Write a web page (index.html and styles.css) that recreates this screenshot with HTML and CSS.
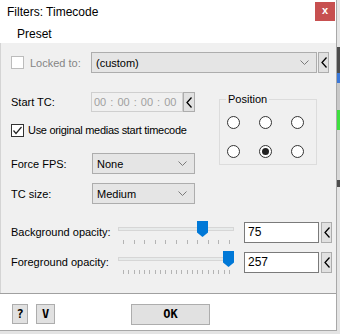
FILE: index.html
```html
<!DOCTYPE html>
<html lang="en">
<head>
    <meta charset="UTF-8">
    <title>Filters: Timecode</title>
    <link rel="stylesheet" href="styles.css">
</head>
<body>
    <div class="screen">
        <div class="window">
            <div class="titlebar">
                <span class="title">Filters: Timecode</span>
                <span class="close">x</span>
            </div>
            <div class="menubar">
                <span class="menu-item">Preset</span>
            </div>

            <div class="content">
                <div class="row locked-row">
                    <span class="checkbox disabled"></span>
                    <span class="label disabled-text">Locked to:</span>
                    <div class="combo combo-wide">
                        <span>(custom)</span>
                        <svg class="chev" width="9" height="5" viewBox="0 0 9 5"><polyline points="0.5,0.5 4.5,4.5 8.5,0.5" fill="none" stroke="#7a7a7a" stroke-width="1"/></svg>
                    </div>
                    <span class="back back-tall"><svg width="6" height="11" viewBox="0 0 6 11"><polyline points="5.5,0.5 1,5.5 5.5,10.5" fill="none" stroke="#000" stroke-width="1.3"/></svg></span>
                </div>

                <div class="middle">
                    <div class="left">
                        <div class="row tc-row">
                            <span class="label field-label">Start TC:</span>
                            <span class="tc-box">00 : 00 : 00 : 00</span>
                            <span class="back back-tc"><svg width="6" height="11" viewBox="0 0 6 11"><polyline points="5.5,0.5 1,5.5 5.5,10.5" fill="none" stroke="#000" stroke-width="1.3"/></svg></span>
                        </div>
                        <div class="row check-row">
                            <span class="checkbox checked">
                                <svg width="11" height="11" viewBox="0 0 11 11"><polyline points="1.5,5.5 4,8.5 9.5,2" fill="none" stroke="#222" stroke-width="1.2"/></svg>
                            </span>
                            <span class="label tight">Use original medias start timecode</span>
                        </div>
                        <div class="row combo-row fps-row">
                            <span class="label field-label">Force FPS:</span>
                            <div class="combo combo-small">
                                <span>None</span>
                                <svg class="chev" width="9" height="5" viewBox="0 0 9 5"><polyline points="0.5,0.5 4.5,4.5 8.5,0.5" fill="none" stroke="#7a7a7a" stroke-width="1"/></svg>
                            </div>
                        </div>
                        <div class="row combo-row size-row">
                            <span class="label field-label">TC size:</span>
                            <div class="combo combo-small">
                                <span>Medium</span>
                                <svg class="chev" width="9" height="5" viewBox="0 0 9 5"><polyline points="0.5,0.5 4.5,4.5 8.5,0.5" fill="none" stroke="#7a7a7a" stroke-width="1"/></svg>
                            </div>
                        </div>
                    </div>

                    <div class="group">
                        <span class="legend">Position</span>
                        <div class="radios">
                            <span class="radio"></span>
                            <span class="radio"></span>
                            <span class="radio"></span>
                            <span class="radio"></span>
                            <span class="radio on"></span>
                            <span class="radio"></span>
                        </div>
                    </div>
                </div>

                <div class="sliders">
                    <div class="row slider-row">
                        <span class="label slider-label">Background opacity:</span>
                        <div class="slider">
                            <div class="track"></div>
                            <div class="ticks">
                                <i></i><i></i><i></i><i></i><i></i><i></i><i></i><i></i><i></i><i></i><i></i>
                            </div>
                            <span class="thumb" style="left: 79px"></span>
                        </div>
                        <span class="input">75</span>
                        <span class="back back-input"><svg width="6" height="11" viewBox="0 0 6 11"><polyline points="5.5,0.5 1,5.5 5.5,10.5" fill="none" stroke="#000" stroke-width="1.3"/></svg></span>
                    </div>
                    <div class="row slider-row second">
                        <span class="label slider-label">Foreground opacity:</span>
                        <div class="slider">
                            <div class="track"></div>
                            <div class="ticks">
                                <i></i><i></i><i></i><i></i><i></i><i></i><i></i><i></i><i></i><i></i><i></i>
                                <i></i><i></i><i></i><i></i><i></i><i></i><i></i><i></i><i></i><i></i>
                            </div>
                            <span class="thumb" style="left: 105px"></span>
                        </div>
                        <span class="input">257</span>
                        <span class="back back-input"><svg width="6" height="11" viewBox="0 0 6 11"><polyline points="5.5,0.5 1,5.5 5.5,10.5" fill="none" stroke="#000" stroke-width="1.3"/></svg></span>
                    </div>
                </div>
            </div>

            <div class="footer">
                <span class="btn btn-help">?</span>
                <span class="btn btn-v">V</span>
                <span class="btn btn-ok">OK</span>
            </div>
        </div>

        <div class="strip">
            <span class="seg seg-light"></span>
            <span class="seg seg-dark"></span>
            <span class="seg seg-blue"></span>
            <span class="seg seg-mid"></span>
            <span class="seg seg-green"></span>
            <span class="seg seg-light2"></span>
            <span class="seg seg-dark2"></span>
        </div>
    </div>
</body>
</html>
```

FILE: styles.css
```css
body {
    margin: 0;
    background: #e4e4e4;
    font-family: "Liberation Sans", Arial, sans-serif;
    font-size: 11px;
    color: #000;
}
.screen {
    display: flex;
    width: 340px;
    height: 334px;
    overflow: hidden;
}
.window {
    width: 336px;
    height: 330px;
    background: #fff;
    border-right: 1px solid #a8a8a8;
    border-bottom: 1px solid #a8a8a8;
    display: flex;
    flex-direction: column;
}
.strip {
    width: 3px;
    display: flex;
    flex-direction: column;
}
.seg { display: block; }
.seg-light { height: 47px; background: #e6e6e6; }
.seg-dark { height: 26px; background: #4d4d4d; }
.seg-blue { height: 10px; background: #3b78d8; }
.seg-mid { height: 27px; background: #c8c8c8; }
.seg-green { height: 20px; background: #3ee03e; }
.seg-light2 { height: 50px; background: #d8d8d8; }
.seg-dark2 { height: 7px; background: #4d4d4d; }

.titlebar {
    height: 26px;
    display: flex;
    align-items: flex-start;
    justify-content: space-between;
}
.title {
    font-size: 12px;
    margin: 5px 0 0 7px;
}
.close {
    width: 20px;
    height: 19px;
    margin: 2px 1px 0 0;
    background: #c75050;
    color: #fff;
    font-weight: bold;
    font-size: 11px;
    text-align: center;
    line-height: 17px;
}
.menubar {
    height: 17px;
}
.menu-item {
    display: inline-block;
    margin-left: 17px;
    font-size: 12px;
    line-height: 17px;
}

.content {
    height: 250px;
    box-sizing: border-box;
    background: #f0f0f0;
    border-left: 1px solid #d4d4d4;
    padding: 9px 0 0 10px;
}
.row {
    display: flex;
    align-items: center;
}
.label { white-space: nowrap; }
.tight { letter-spacing: -0.3px; }
.disabled-text { color: #858585; }

.checkbox {
    box-sizing: border-box;
    width: 13px;
    height: 13px;
    background: #fff;
    border: 1px solid #333;
    display: flex;
    align-items: center;
    justify-content: center;
    flex: none;
}
.checkbox.disabled { border-color: #bcbcbc; }

.locked-row { height: 21px; }
.locked-row .label { margin-left: 6px; width: 61px; }

.combo {
    box-sizing: border-box;
    height: 21px;
    background: #e5e5e5;
    border: 1px solid #adadad;
    display: flex;
    align-items: center;
    justify-content: space-between;
    padding: 0 7px 0 4px;
}
.combo-wide { width: 226px; }
.combo-small { width: 103px; }

.back {
    box-sizing: border-box;
    width: 11px;
    background: #e1e1e1;
    border: 1px solid #adadad;
    display: flex;
    align-items: center;
    justify-content: center;
}
.back-tall { height: 21px; margin-left: 1px; }
.back-tc { height: 20px; width: 12px; }
.back-input { height: 21px; margin-left: 2px; }

.middle {
    display: flex;
    margin-top: 19px;
}
.left { width: 208px; }
.field-label { width: 80px; }
.tc-row { height: 20px; }
.tc-box {
    box-sizing: border-box;
    width: 92px;
    height: 20px;
    border: 1px solid #cfcfcf;
    color: #a0a0a0;
    padding-left: 2px;
    line-height: 18px;
    word-spacing: 1px;
    white-space: nowrap;
}
.check-row { height: 14px; margin-top: 11px; }
.check-row .label { margin-left: 4px; }
.combo-row { height: 21px; }
.fps-row { margin-top: 16px; }
.size-row { margin-top: 9px; }
.combo-row .field-label { width: 81px; }

.group {
    position: relative;
    box-sizing: border-box;
    width: 98px;
    height: 66px;
    margin: 7px 0 0 0;
    border: 1px solid #dcdcdc;
    padding: 16px 0 0 7px;
}
.legend {
    position: absolute;
    left: 6px;
    top: -7px;
    padding: 0 2px;
    background: #f0f0f0;
    font-size: 11px;
}
.radios {
    display: grid;
    grid-template-columns: repeat(3, 13px);
    column-gap: 19px;
    row-gap: 16px;
}
.radio {
    box-sizing: border-box;
    width: 13px;
    height: 13px;
    border: 1px solid #333;
    border-radius: 50%;
    background: #fff;
    display: flex;
    align-items: center;
    justify-content: center;
}
.radio.on::after {
    content: "";
    width: 7px;
    height: 7px;
    border-radius: 50%;
    background: #222;
}

.sliders { margin-top: 18px; }
.slider-row { height: 21px; align-items: flex-start; }
.slider-row.second { margin-top: 9px; }
.slider-label { width: 107px; line-height: 21px; }
.slider {
    position: relative;
    width: 116px;
    height: 21px;
}
.track {
    box-sizing: border-box;
    height: 4px;
    margin-top: 5px;
    background: #e7eaea;
    border: 1px solid #d6d6d6;
}
.ticks {
    display: flex;
    justify-content: space-between;
    margin-top: 9px;
    padding: 0 4px 0 5px;
    height: 4px;
}
.ticks i {
    width: 1px;
    background: #b4b4b4;
}
.thumb {
    position: absolute;
    top: -1px;
    width: 11px;
    height: 16px;
    background: #0078d7;
    clip-path: polygon(0 0, 100% 0, 100% 72%, 50% 100%, 0 72%);
}
.input {
    box-sizing: border-box;
    width: 75px;
    height: 21px;
    margin-left: 10px;
    background: #fff;
    border: 1px solid #7a7a7a;
    padding-left: 3px;
    line-height: 19px;
    font-size: 12px;
}

.footer {
    flex: 1;
    border-top: 1px solid #a0a0a0;
    display: flex;
    align-items: flex-start;
    padding: 10px 0 0 12px;
}
.btn {
    box-sizing: border-box;
    height: 20px;
    background: #e1e1e1;
    border: 1px solid #adadad;
    font-family: "DejaVu Sans Mono", monospace;
    font-weight: bold;
    font-size: 12px;
    text-align: center;
    line-height: 18px;
}
.btn-help { width: 16px; }
.btn-v { width: 19px; margin-left: 8px; }
.btn-ok { width: 79px; margin-left: 76px; height: 21px; }
```
